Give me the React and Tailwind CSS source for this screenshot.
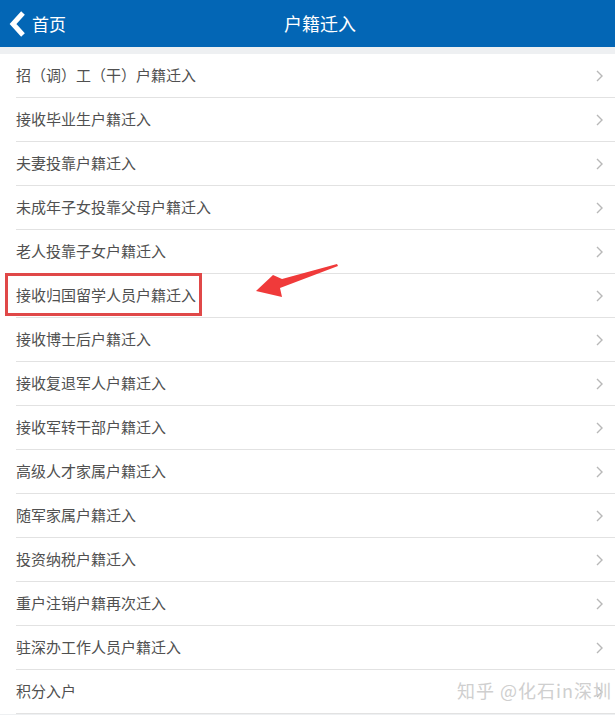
import React from 'react';

const items = [
  '招（调）工（干）户籍迁入',
  '接收毕业生户籍迁入',
  '夫妻投靠户籍迁入',
  '未成年子女投靠父母户籍迁入',
  '老人投靠子女户籍迁入',
  '接收归国留学人员户籍迁入',
  '接收博士后户籍迁入',
  '接收复退军人户籍迁入',
  '接收军转干部户籍迁入',
  '高级人才家属户籍迁入',
  '随军家属户籍迁入',
  '投资纳税户籍迁入',
  '重户注销户籍再次迁入',
  '驻深办工作人员户籍迁入',
  '积分入户',
];

const font = { fontFamily: '"Noto Sans CJK SC", "Liberation Sans", sans-serif' };

const App = () => {
  return (
    <div className="relative w-[615px] h-[715px] overflow-hidden bg-[#eef0f2]" style={font}>
      {/* Header */}
      <div className="h-[47px] bg-[#0366b5] flex items-center pl-[9px]">
        <div className="w-[120px] flex items-center">
          <svg width="18" height="26" viewBox="0 0 18 26">
            <path d="M14 2 L4 13 L14 24" fill="none" stroke="#fff" strokeWidth="5" strokeLinejoin="miter" />
          </svg>
          <span className="ml-[5px] text-white text-[17px]">首页</span>
        </div>
        <span className="ml-[155px] text-white text-[18px]">户籍迁入</span>
      </div>

      {/* List */}
      <div className="mt-[7px] bg-white">
        {items.map((item, i) => (
          <div key={i} className="pl-4">
            <div className="h-[44px] flex items-center justify-between border-b border-[#e2e2e2] pr-[12px]">
              <span className="text-[15px] text-[#505050]">{item}</span>
              <svg width="7" height="12" viewBox="0 0 7 12">
                <path d="M1 1 L6 6 L1 11" fill="none" stroke="#b8b8b8" strokeWidth="1.4" />
              </svg>
            </div>
          </div>
        ))}
      </div>

      {/* Highlight box */}
      <div className="absolute left-[5px] top-[273px] w-[197px] h-[43px] border-[3px] border-[#e04848]" />

      {/* Arrow */}
      <svg className="absolute left-[250px] top-[260px]" width="95" height="40" viewBox="0 0 95 40">
        <path d="M87 4 L32 19 L23 15 L6 31 L32 37 L30 28 L88 6 Z" fill="#f03a3a" />
      </svg>

      {/* Watermark */}
      <div className="absolute right-[3px] top-[677px] text-[18px] tracking-[1px] text-[#cfcfcf]">知乎 @化石in深圳</div>
    </div>
  );
};

export default App;
